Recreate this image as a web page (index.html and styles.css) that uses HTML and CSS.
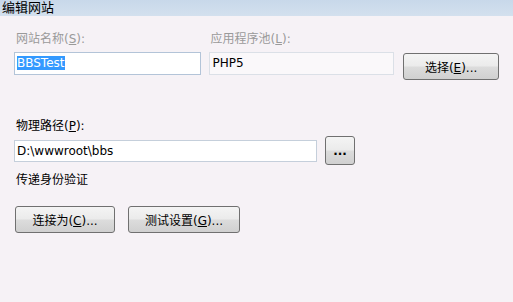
FILE: index.html
```html
<!DOCTYPE html>
<html lang="zh">
<head>
    <meta charset="UTF-8">
    <title>编辑网站</title>
    <link rel="stylesheet" href="styles.css">
</head>
<body>
    <div class="titlebar">编辑网站</div>

    <div class="content">
        <div class="row-top">
            <div class="field site-name">
                <label class="muted">网站名称(<u>S</u>):</label>
                <div class="textbox"><span class="selected">BBSTest</span></div>
            </div>
            <div class="field app-pool">
                <label class="muted">应用程序池(<u>L</u>):</label>
                <div class="textbox readonly">PHP5</div>
            </div>
            <button class="btn select-btn">选择(<u>E</u>)...</button>
        </div>

        <div class="field path-field">
            <label>物理路径(<u>P</u>):</label>
            <div class="path-row">
                <div class="textbox path-box">D:\wwwroot\bbs</div>
                <button class="btn browse-btn">...</button>
            </div>
        </div>

        <div class="auth-label">传递身份验证</div>

        <div class="button-row">
            <button class="btn connect-btn">连接为(<u>C</u>)...</button>
            <button class="btn test-btn">测试设置(<u>G</u>)...</button>
        </div>
    </div>
</body>
</html>
```

FILE: styles.css
```css
body {
    margin: 0;
    background: #f6f2f6;
    font-family: 'DejaVu Sans', 'Noto Sans CJK SC', sans-serif;
    font-size: 12px;
    color: #000;
}

.titlebar {
    height: 16px;
    line-height: 16px;
    padding-left: 2px;
    font-size: 13px;
    background: linear-gradient(#c8d8ea, #d3e0ee);
}

.content {
    padding: 16px 14px 0 14px;
}

label {
    display: block;
    line-height: 14px;
    padding-left: 2px;
}

u {
    text-decoration: underline;
}

.muted {
    color: #9a9a9a;
}

.row-top {
    display: flex;
    align-items: flex-start;
}

.field {
    display: flex;
    flex-direction: column;
    gap: 6px;
}

.site-name {
    width: 187px;
}

.app-pool {
    width: 186px;
    margin-left: 8px;
}

.textbox {
    box-sizing: border-box;
    height: 23px;
    line-height: 21px;
    padding-left: 2px;
    background: #fff;
    border: 1px solid #b3c4d8;
    white-space: nowrap;
}

.readonly {
    background: #faf8fa;
    border-color: #dbe0e7;
    padding-left: 3px;
}

.selected {
    background: #3399ff;
    color: #fff;
}

.btn {
    box-sizing: border-box;
    height: 27px;
    padding: 0;
    font-family: inherit;
    font-size: 12px;
    color: #000;
    border: 1px solid #707070;
    border-radius: 3px;
    background: linear-gradient(#f4f4f4 0%, #ebebeb 48%, #dcdcdc 52%, #d0d0d0 100%);
}

.select-btn {
    width: 96px;
    margin: 21px 0 0 9px;
}

.path-field {
    margin-top: 39px;
    gap: 3px;
}

.path-row {
    display: flex;
    align-items: center;
}

.path-box {
    width: 303px;
    height: 22px;
    line-height: 20px;
    border-color: #c5cfdb;
}

.browse-btn {
    width: 30px;
    height: 29px;
    margin-left: 8px;
    font-weight: bold;
}

.auth-label {
    margin-top: 8px;
    padding-left: 2px;
    line-height: 14px;
}

.button-row {
    display: flex;
    gap: 13px;
    margin-top: 19px;
    padding-left: 1px;
}

.connect-btn {
    width: 100px;
}

.test-btn {
    width: 112px;
}
```
